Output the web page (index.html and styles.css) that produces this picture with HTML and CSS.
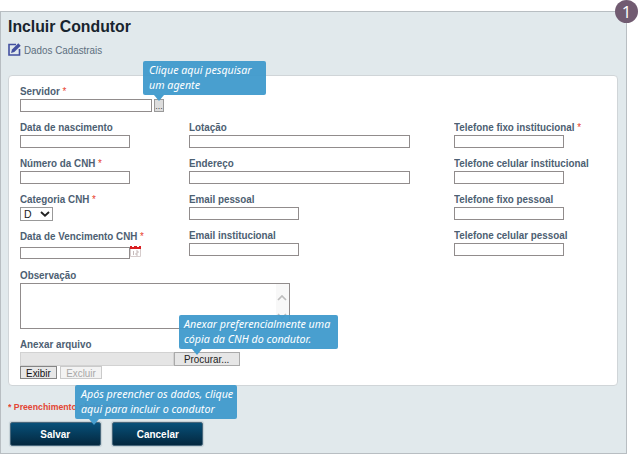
FILE: index.html
```html
<!DOCTYPE html>
<html lang="pt-BR">
<head>
<meta charset="utf-8">
<title>Incluir Condutor</title>
<link rel="stylesheet" href="styles.css">
</head>
<body>
<main class="panel">
  <h1>Incluir Condutor</h1>
  <div class="subtitle">
    <svg class="edit-icon" viewBox="0 0 13 13"><path d="M8 1.500H1V12h10.500V6" fill="none" stroke="#4350a0" stroke-width="1.600"/><path d="M3 10 4 6.500 10.300.3l2.400 2.400L6.300 9z" fill="#4350a0"/></svg>
    <span class="narrow">Dados Cadastrais</span>
  </div>
  <form class="card">
    <div class="field">
      <label>Servidor <i>*</i></label>
      <div class="line"><span class="input medium"></span><span class="dots">...</span>
        <div class="tip tip-search"><span>Clique aqui pesquisar</span><span>um agente</span></div>
      </div>
    </div>
    <div class="columns">
      <div class="column">
        <div class="field"><label>Data de nascimento</label><span class="input"></span></div>
        <div class="field"><label>Número da CNH <i>*</i></label><span class="input"></span></div>
        <div class="field"><label>Categoria CNH <i>*</i></label>
          <span class="select">D<svg viewBox="0 0 10 6"><path d="m1 1 4 3.600L9 1" fill="none" stroke="#222" stroke-width="1.900"/></svg></span></div>
        <div class="field"><label>Data de Vencimento CNH <i>*</i></label>
          <div class="date"><span class="input"></span>
            <svg class="calendar" viewBox="0 0 11 12"><path d="M.5 3h10v8.500H.5z" fill="#fff" stroke="#d6cccc"/><path d="M0 1h11v3H0z" fill="#d91e22"/><path d="M2 0h2v2H2zM7 0h2v2H7z" fill="#fff"/><path d="M3.500 6v4M6 6h2v2H6v2h2" fill="none" stroke="#b9aaaa" stroke-width=".8"/></svg></div></div>
      </div>
      <div class="column">
        <div class="field"><label>Lotação</label><span class="input wide"></span></div>
        <div class="field"><label>Endereço</label><span class="input wide"></span></div>
        <div class="field"><label>Email pessoal</label><span class="input"></span></div>
        <div class="field"><label>Email institucional</label><span class="input"></span></div>
      </div>
      <div class="column">
        <div class="field"><label>Telefone fixo institucional <i>*</i></label><span class="input"></span></div>
        <div class="field"><label>Telefone celular institucional</label><span class="input"></span></div>
        <div class="field"><label>Telefone fixo pessoal</label><span class="input"></span></div>
        <div class="field"><label>Telefone celular pessoal</label><span class="input"></span></div>
      </div>
    </div>
    <div class="field"><label>Observação</label>
      <div class="textarea"><div class="scroll">
        <svg viewBox="0 0 10 6"><path d="m1 5 4-4 4 4" fill="none" stroke="#bdbdbd" stroke-width="1.700"/></svg>
        <svg viewBox="0 0 10 6"><path d="m1 1 4 4 4-4" fill="none" stroke="#bdbdbd" stroke-width="1.700"/></svg>
      </div></div>
    </div>
    <div class="field attachment"><label>Anexar arquivo</label>
      <div class="file"><span class="path"></span><span class="browse"><span class="narrow">Procurar...</span></span>
        <div class="tip tip-file"><span>Anexar preferencialmente uma</span><span>cópia da CNH do condutor.</span></div>
      </div>
    </div>
    <div class="small-buttons"><span class="small"><span class="narrow center">Exibir</span></span><span class="small disabled"><span class="narrow center">Excluir</span></span></div>
  </form>
  <p class="required"><span class="narrow">* Preenchimento obrigatório</span></p>
  <div class="actions"><div class="action"><span class="narrow center">Salvar</span>
      <div class="tip tip-save"><span>Após preencher os dados, clique</span><span>aqui para incluir o condutor</span></div></div><div class="action"><span class="narrow center">Cancelar</span></div></div>
  <span class="badge">1</span>
</main>
</body>
</html>
```
FILE: styles.css
```css
* { box-sizing: border-box; }
body { margin: 0; background: #fff; font-family: "Liberation Sans", Arial, sans-serif; overflow: hidden; }
.panel { position: relative; width: 627px; height: 443px; margin-top: 11px; padding: 0 8px 0 7px; border: 1px solid #b8bec2; background: #e1e9ec; }
.narrow { display: inline-block; transform: scaleX(.92); transform-origin: left; }
.center { transform-origin: center; }
h1 { margin: 0; padding-top: 5px; height: 28px; font-size: 15.8px; line-height: 19px; color: #18242e; white-space: nowrap; }
.subtitle { display: flex; align-items: center; gap: 3px; height: 19px; font-size: 10.7px; color: #5d6f7e; }
.edit-icon { width: 13px; height: 13px; }
.card { display: block; width: 610px; height: 311px; margin-top: 16px; padding: 9px 11px 0; border: 1px solid #d0d5d8; border-radius: 4px; background: #fff; }
label { display: block; width: max-content; height: 14px; font-size: 10.8px; line-height: 12px; font-weight: bold; color: #4d6072; white-space: nowrap; transform: scaleX(.91); transform-origin: left; }
label i { font-style: normal; font-weight: normal; color: #e8402c; }
.field { margin-bottom: 9px; }
.input { display: block; width: 110px; height: 13px; border: 1px solid #918c8c; background: #fff; }
.medium { width: 132px; }
.wide { width: 221px; }
.line { position: relative; display: flex; gap: 2px; height: 13px; }
.dots { width: 10px; height: 13px; border: 1px solid #999; background: #ddd; font-size: 9px; line-height: 12px; text-align: center; color: #444; }
.columns { display: grid; grid-template-columns: 169px 265px 1fr; height: 148px; }
.select { display: flex; align-items: center; justify-content: space-between; width: 33px; height: 14px; padding: 0 2px 0 3px; border: 1px solid #999; font-size: 10.5px; line-height: 12px; color: #222; }
.select svg { width: 10px; height: 6px; }
.date { display: flex; height: 16px; padding-top: 1px; }
.date .input { margin-top: 2px; height: 12px; }
.calendar { width: 11px; height: 12px; }
.textarea { width: 270px; height: 46px; border: 1px solid #918c8c; display: flex; justify-content: flex-end; }
.scroll { width: 13px; padding: 11px 2px 9px 1px; background: #f8f8f8; display: flex; flex-direction: column; justify-content: space-between; }
.scroll svg { width: 10px; height: 6px; }
.attachment { margin-bottom: 0; }
.file { position: relative; display: flex; width: 220px; height: 14px; }
.path { width: 154px; border: 1px solid #d2d2d2; background: #e5e5e5; }
.browse { width: 66px; border: 1px solid #aaa; background: #e6e6e6; font-size: 10.700px; line-height: 12px; padding-left: 9px; color: #222; }
.small-buttons { display: flex; gap: 3px; }
.small { width: 37px; height: 13px; border: 1px solid #858585; background: #e7e7e7; font-size: 10.700px; line-height: 12px; text-align: center; color: #111; }
.small.disabled { width: 42px; border-color: #cacaca; background: #f3f3f3; color: #a7a7a7; }
.required { margin: 14px 0 0; height: 13px; font-size: 9.8px; line-height: 13px; font-weight: bold; color: #e34635; }
.required .narrow { transform: scaleX(.89); }
.actions { display: flex; gap: 11px; margin: 9px 0 0 2px; }
.action { position: relative; width: 91px; height: 24px; border: 1px solid #47677b; border-radius: 2px; background: linear-gradient(#075079, #04283f); box-shadow: 0 0 1px 1px #c3cfd5; color: #fff; font-size: 10.800px; font-weight: bold; line-height: 22px; text-align: center; }
.tip { position: absolute; z-index: 2; height: 34px; padding: 2px 6px; border-radius: 2px; background: rgba(62, 153, 204, .94); font-family: "Noto Sans", sans-serif; font-size: 10.7px; font-style: italic; font-weight: normal; line-height: 14.500px; color: #fff; white-space: nowrap; text-align: left; }
.tip span { display: block; }
.tip::after { content: ""; position: absolute; top: 100%; left: 11px; border: solid transparent; border-width: 6px 5px 0; border-top-color: #469ece; }
.tip-search { left: 123px; top: -38px; width: 123px; }
.tip-file { left: 159px; top: -37px; width: 159px; padding-left: 5px; }
.tip-file::after { left: 13px; }
.tip-save { left: 64px; top: -38px; width: 162px; }
.tip-save::after { left: 14px; }
.badge { position: absolute; right: -12px; top: -12px; width: 23px; height: 23px; border-radius: 50%; background: #715b71; color: #fff; font: 17px/23px "Open Sans", sans-serif; text-align: center; }
```
